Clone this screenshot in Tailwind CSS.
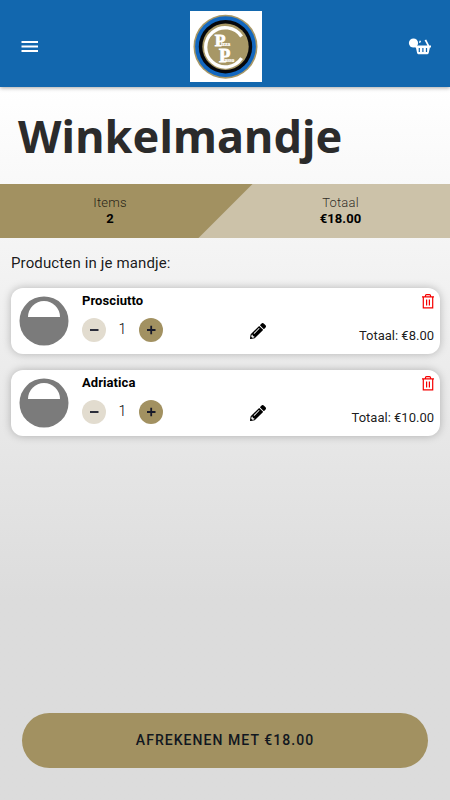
<!DOCTYPE html>
<html lang="nl">
<head>
<meta charset="utf-8">
<title>Winkelmandje</title>
<script src="https://cdn.jsdelivr.net/npm/@tailwindcss/browser@4"></script>
</head>
<body class="font-[Roboto,sans-serif] text-black">
<svg width="0" height="0" class="absolute">
  <symbol id="pizza" viewBox="0 0 50 50"><circle cx="25" cy="25" r="24.5" fill="#7b7b7b"/><path d="M9 21a16 16 0 0 1 32 0z" fill="#fff"/></symbol>
  <symbol id="pencil" viewBox="0 0 512 512"><path d="M498 142l-46 46c-5 5-13 5-17 0L324 77c-5-5-5-12 0-17l46-46c19-19 49-19 68 0l60 60c19 19 19 49 0 68zm-214-42L22 362 0 484c-3 16 12 30 28 28l122-22 262-262c5-5 5-13 0-17L301 100c-4-5-12-5-17 0zM124 340c-5-6-5-14 0-20l154-154c6-5 14-5 20 0s5 14 0 20L144 340c-6 5-14 5-20 0zm-36 84h48v36l-64 12-32-31 12-65h36v48z"/></symbol>
  <symbol id="trash" viewBox="0 0 12 15"><path d="M0 2.9h12M1.3 3v10.9h9.4V3M3.4 2.8V2c0-.8.5-1.3 1.2-1.3h2.8c.7 0 1.2.5 1.2 1.3v.8M4.6 5.4v6.1M7.4 5.4v6.1" fill="none" stroke="#f50000" stroke-width="1.2"/></symbol>
</svg>
<div class="flex h-[800px] w-[450px] flex-col overflow-hidden bg-linear-to-b from-white from-[11%] to-[#dcdcdc] to-[75%]">
  <header class="flex h-[87px] shrink-0 items-center justify-between bg-[#1267ae] pt-[6px] pr-[19px] pl-[21px] shadow-[0_1px_4px_rgba(0,0,0,0.35)]">
    <svg class="h-3 w-[42px]" viewBox="0 0 42 12"><path d="M.5 1h16.5M.5 5.5h16.5M.5 10h16.5" stroke="#fff" stroke-width="1.8"/></svg>
    <svg class="h-[71px] w-[72px]" viewBox="0 0 72 71">
      <path fill="#fff" d="M0 0h72v71H0z"/>
      <circle cx="35.5" cy="35.7" r="32" fill="#a79766"/>
      <circle cx="35.5" cy="35.7" r="30.4" fill="#1267c0"/>
      <circle cx="35.5" cy="35.7" r="26.7" fill="#05070c"/>
      <circle cx="35.5" cy="35.7" r="23.2" fill="#a79766"/>
      <path d="M51.6 25.5A19.6 19.6 0 1 0 51.6 47.2" fill="none" stroke="#fff" stroke-width="3.3"/>
      <g fill="#fff" stroke="#fff" class="font-['Liberation_Serif',serif] font-bold"><text x="24.7" y="35.2" font-size="17.5" stroke-width=".8">P<tspan x="31" font-size="5.6" stroke-width=".2">izza</tspan></text><text x="29" y="51.3" font-size="18.5" stroke-width=".8">P<tspan x="34.4" font-size="5.6" stroke-width=".2">asso</tspan></text></g>
    </svg>
    <svg class="h-[19px] w-[43px]" viewBox="388 37 43 19">
      <path d="M414.8 45.4h16.2v2h-1.1l-1.2 5.7q-.2 1.1-1.2 1.1h-9.2q-1 0-1.2-1.1l-1.2-5.7h-1.1zM424.6 40.3l1.6-.8 3.2 6.3h-1.9zM419.7 40.6l1.4.5-1 2-1.2-.5z" fill="#fff"/>
      <path d="M419.3 48v4M422.9 48v4M426.5 48v4" stroke="#1267ae" stroke-width="1.2"/>
      <circle cx="413.5" cy="43" r="4.6" fill="#fff"/>
    </svg>
  </header>
  <h1 class="h-[97px] shrink-0 pl-[18px] font-['Noto_Sans','Open_Sans',sans-serif] text-[45px] leading-[98px] font-bold tracking-[.1px] text-[#2b2b2b]">Winkelmandje</h1>
  <section class="relative grid h-[54px] shrink-0 grid-cols-[220px_1fr] bg-[#ccc2a9] text-center text-[13px] leading-4">
    <svg class="absolute inset-0 h-[54px] w-[253px]" viewBox="0 0 253 54"><path d="M0 0h252.5l-54 54H0z" fill="#a29161"/></svg>
    <div class="relative pt-[11px]"><p class="font-light tracking-[.2px] text-black/80">Items</p><p class="font-bold">2</p></div>
    <div class="relative pt-[11px]"><p class="pl-[11px] font-light tracking-[.2px] text-black/80">Totaal</p><p class="pl-[11px] font-bold tracking-[.1px]">€18.00</p></div>
  </section>
  <h2 class="h-[50px] shrink-0 pl-[11px] text-[15px] leading-[50px] tracking-[.13px] text-black/90">Producten in je mandje:</h2>
  <main class="flex flex-col gap-4 pr-[10px] pl-[11px]">
    <article class="flex h-[66px] rounded-xl bg-white pl-2 shadow-[0_0_8px_rgba(0,0,0,0.25)]">
      <svg class="mt-2 h-[50px] w-[50px]"><use href="#pizza"/></svg>
      <div class="ml-[13px] w-[168px] pt-[5px]">
        <h3 class="text-[13px] leading-4 font-bold tracking-[.08px]">Prosciutto</h3>
        <div class="mt-[9px] flex items-center">
          <svg class="h-6 w-6" viewBox="0 0 24 24"><circle cx="12" cy="12" r="12" fill="#e2dccf"/><path d="M8 12h8.5" stroke="#17192a" stroke-width="1.8"/></svg>
          <span class="-mt-[3px] w-[33px] text-center text-sm leading-5 font-light">1</span>
          <svg class="h-6 w-6" viewBox="0 0 24 24"><circle cx="12" cy="12" r="12" fill="#a29161"/><path d="M8 12h8.5M12.2 7.8v8.5" stroke="#17192a" stroke-width="1.8"/></svg>
        </div>
      </div>
      <svg class="mt-[35px] h-4 w-4"><use href="#pencil"/></svg>
      <div class="flex flex-1 flex-col items-end pt-[6px] pr-[6px]"><svg class="h-[15px] w-3"><use href="#trash"/></svg><p class="mt-[19px] text-[13px] leading-4 text-black/90">Totaal: €8.00</p></div>
    </article>
    <article class="flex h-[66px] rounded-xl bg-white pl-2 shadow-[0_0_8px_rgba(0,0,0,0.25)]">
      <svg class="mt-2 h-[50px] w-[50px]"><use href="#pizza"/></svg>
      <div class="ml-[13px] w-[168px] pt-[5px]">
        <h3 class="text-[13px] leading-4 font-bold tracking-[.08px]">Adriatica</h3>
        <div class="mt-[9px] flex items-center">
          <svg class="h-6 w-6" viewBox="0 0 24 24"><circle cx="12" cy="12" r="12" fill="#e2dccf"/><path d="M8 12h8.5" stroke="#17192a" stroke-width="1.8"/></svg>
          <span class="-mt-[3px] w-[33px] text-center text-sm leading-5 font-light">1</span>
          <svg class="h-6 w-6" viewBox="0 0 24 24"><circle cx="12" cy="12" r="12" fill="#a29161"/><path d="M8 12h8.5M12.2 7.8v8.5" stroke="#17192a" stroke-width="1.8"/></svg>
        </div>
      </div>
      <svg class="mt-[35px] h-4 w-4"><use href="#pencil"/></svg>
      <div class="flex flex-1 flex-col items-end pt-[6px] pr-[6px]"><svg class="h-[15px] w-3"><use href="#trash"/></svg><p class="mt-[19px] text-[13px] leading-4 text-black/90">Totaal: €10.00</p></div>
    </article>
  </main>
  <button class="mt-auto mr-[22px] mb-8 ml-[22px] h-[55px] shrink-0 rounded-full bg-[#a29161] pb-[2px] text-sm font-medium tracking-[1.05px] text-[#111720]">AFREKENEN MET €18.00</button>
</div>
</body>
</html>
